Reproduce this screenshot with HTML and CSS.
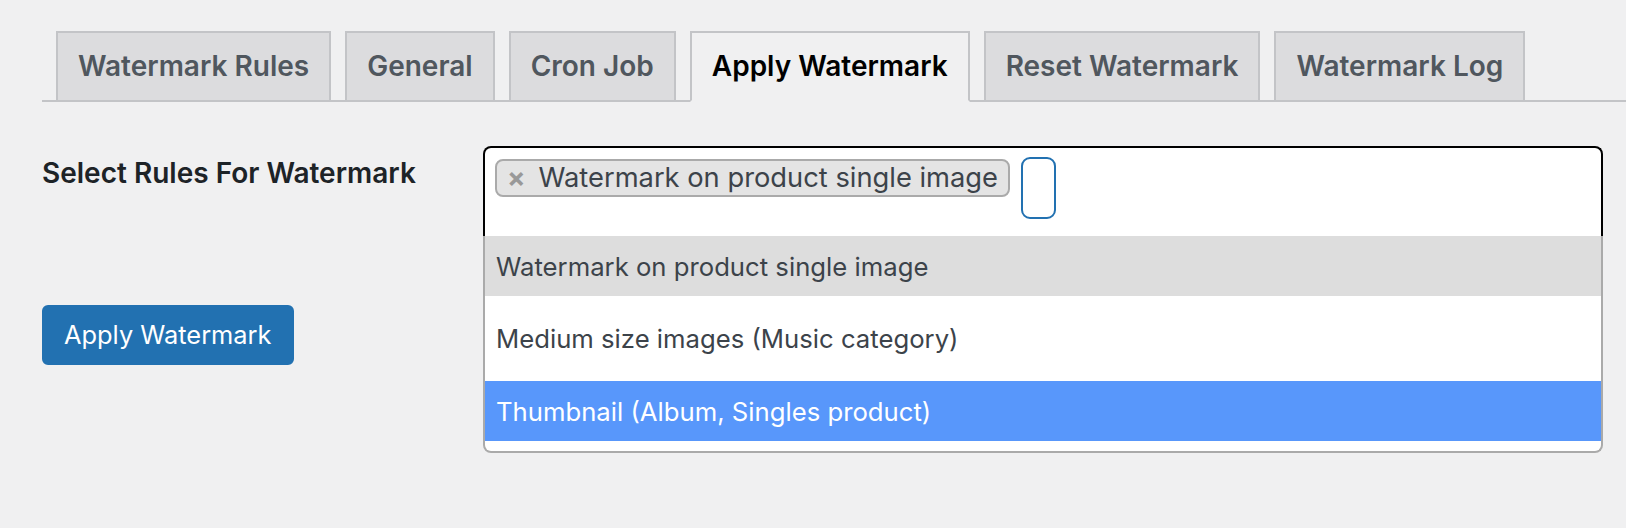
FILE: index.html
```html
<!DOCTYPE html>
<html lang="en">
<head>
<meta charset="utf-8">
<title>Apply Watermark</title>
<link rel="stylesheet" href="styles.css">
</head>
<body>
<div class="wrap">
  <nav class="tabs">
    <a class="tab" href="#">Watermark Rules</a>
    <a class="tab" href="#">General</a>
    <a class="tab" href="#">Cron Job</a>
    <a class="tab tab-active" href="#">Apply Watermark</a>
    <a class="tab" href="#">Reset Watermark</a>
    <a class="tab" href="#">Watermark Log</a>
  </nav>
  <div class="row">
    <div class="side">
      <div class="label">Select Rules For Watermark</div>
      <button class="btn" type="button">Apply Watermark</button>
    </div>
    <div class="field">
      <div class="select">
        <div class="selection">
          <span class="chip"><span class="chip-x">×</span>Watermark on product single image</span>
          <span class="search"></span>
        </div>
        <ul class="dropdown">
          <li class="opt opt-hover">Watermark on product single image</li>
          <li class="opt opt-tall">Medium size images (Music category)</li>
          <li class="opt opt-active">Thumbnail (Album, Singles product)</li>
        </ul>
      </div>
    </div>
  </div>
</div>
</body>
</html>
```
FILE: styles.css
```css
html,
body {
  min-height: 100%;
}

body {
  margin: 0;
  background: #f0f0f1;
  font-family: Inter, "Noto Sans", sans-serif;
}

.wrap {
  padding-left: 42px;
}

.tabs {
  display: flex;
  padding-top: 31px;
  border-bottom: 2px solid #c3c4c7;
}

.tab {
  margin-left: 14px;
  margin-bottom: -2px;
  padding: 10px 20px;
  line-height: 47px;
  font-size: 28px;
  font-weight: 600;
  color: #50575e;
  background: #dcdcde;
  border: 2px solid #c3c4c7;
  text-decoration: none;
  white-space: nowrap;
}

.tab-active {
  background: #f0f0f1;
  color: #000;
  border-bottom-color: #f0f0f1;
}

.row {
  display: flex;
  align-items: flex-start;
  margin-top: 44px;
}

.side {
  width: 441px;
  flex: none;
  display: flex;
  flex-direction: column;
  align-items: flex-start;
  gap: 114px;
  padding-top: 9px;
}

.label {
  font-size: 28px;
  line-height: 36px;
  font-weight: 600;
  color: #1d2327;
}

.field {
  flex: 1;
  margin-right: 23px;
}

.selection {
  display: flex;
  align-items: flex-start;
  gap: 11px;
  padding: 9px 10px 17px;
  border: 2px solid #000;
  border-bottom: none;
  border-radius: 8px 8px 0 0;
  background: #fff;
}

.chip {
  display: flex;
  align-items: center;
  margin-top: 2px;
  height: 38px;
  box-sizing: border-box;
  padding: 0 10px;
  border: 2px solid #aaa;
  border-radius: 8px;
  background: #e4e4e4;
  font-size: 27.3px;
  line-height: 34px;
  color: #3c434a;
  white-space: nowrap;
}

.chip-x {
  color: #999;
  font-weight: 700;
  margin-right: 13px;
}

.search {
  width: 35px;
  height: 62px;
  box-sizing: border-box;
  border: 2px solid #2271b1;
  border-radius: 9px;
}

.dropdown {
  margin: 0;
  padding: 0 0 10px;
  list-style: none;
  background: #fff;
  border: 2px solid #aaa;
  border-top: none;
  border-radius: 0 0 8px 8px;
}

.opt {
  display: flex;
  align-items: center;
  height: 60px;
  padding: 0 11px;
  font-size: 25.7px;
  color: #3c434a;
}

.opt-hover {
  background: #ddd;
}

.opt-tall {
  height: 85px;
}

.opt-active {
  background: #5897fb;
  color: #fff;
}

.btn {
  height: 60px;
  padding: 0 20px;
  border: 2px solid #2271b1;
  border-radius: 6px;
  background: #2271b1;
  color: #fff;
  font-family: inherit;
  font-size: 25.4px;
  line-height: 56px;
  cursor: pointer;
}
```
